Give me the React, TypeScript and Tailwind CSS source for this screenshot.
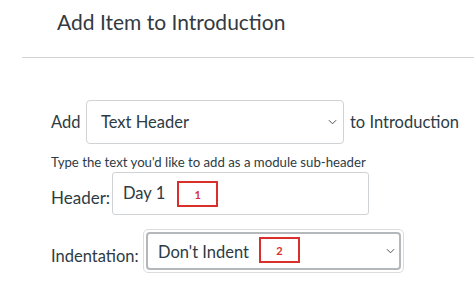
import React from 'react'

function Chevron({ className }: { className?: string }) {
  return (
    <svg viewBox="0 0 10 6" className={className} fill="none" stroke="#4a4f55" strokeWidth="1.1">
      <path d="M1 1l4 4 4-4" />
    </svg>
  )
}

function Badge({ n }: { n: string }) {
  return (
    <span className="w-[41px] h-[26px] flex items-center justify-center border-2 border-[#d9302c] text-[#d9302c] text-[11px] font-bold leading-none">
      {n}
    </span>
  )
}

export default function App() {
  return (
    <div className="w-[474px] h-[295px] bg-white overflow-hidden text-[#2d3b45] font-['Lato','Noto_Sans',sans-serif]">
      <div className="h-[57px] pl-[57px] pt-[8px]">
        <h1 className="text-[21px] leading-[28px] text-[#333a40]">Add Item to Introduction</h1>
      </div>
      <div className="ml-[22px] border-t border-[#d3d3d3]" />

      <div className="pl-[51px] pt-[42px]">
        <div className="flex items-center h-[44px]">
          <span className="text-[16.5px] leading-none w-[35px]">Add</span>
          <div className="w-[258px] h-[44px] border border-[#cfd3d6] rounded-[4px] flex items-center justify-between pl-[14px] pr-[6px]">
            <span className="text-[16.5px] leading-none">Text Header</span>
            <Chevron className="w-[9px] h-[6px]" />
          </div>
          <span className="ml-[6px] text-[16.5px] leading-none">to Introduction</span>
        </div>

        <p className="mt-[10px] text-[13.2px] leading-[16px]">Type the text you'd like to add as a module sub-header</p>

        <div className="mt-[2px] flex items-center h-[43px]">
          <span className="text-[17px] leading-none w-[61px] mt-[8px]">Header:</span>
          <div className="w-[257px] h-[43px] border border-[#cfd3d6] rounded-[3px] flex items-start pl-[10px] pt-[8px]">
            <span className="text-[16.5px] leading-[20px] mt-[2px]">Day 1</span>
            <div className="ml-[12px]">
              <Badge n="1" />
            </div>
          </div>
        </div>

        <div className="mt-[14px] flex items-center h-[44px]">
          <span className="text-[16.5px] leading-none w-[92px] mt-[11px]">Indentation:</span>
          <div className="w-[261px] h-[44px] border border-[#dcdcdc] rounded-[5px] p-[2px]">
            <div className="w-full h-full border-2 border-[#b5b8bb] rounded-[4px] flex items-center justify-between pl-[10px] pr-[4px]">
              <div className="flex items-center">
                <span className="text-[16.5px] leading-none mt-[2px]">Don't Indent</span>
                <div className="ml-[10px] mt-[-2px]">
                  <Badge n="2" />
                </div>
              </div>
              <Chevron className="w-[9px] h-[6px]" />
            </div>
          </div>
        </div>
      </div>
    </div>
  )
}
